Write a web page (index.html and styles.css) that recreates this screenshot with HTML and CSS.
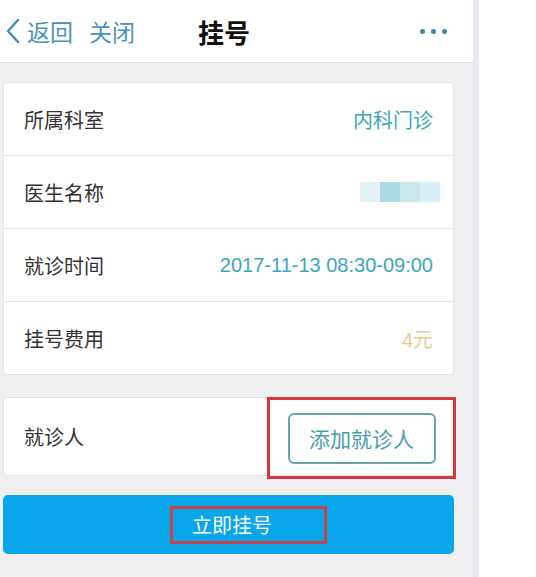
FILE: index.html
```html
<!DOCTYPE html>
<html lang="zh-CN">
<head>
    <meta charset="UTF-8">
    <meta name="viewport" content="width=device-width, initial-scale=1.0">
    <title>挂号</title>
    <link rel="stylesheet" href="styles.css">
</head>
<body>
    <div class="phone">
        <div class="header">
            <div class="nav-left">
                <svg class="back-icon" width="15" height="26" viewBox="0 0 15 26">
                    <path d="M13 2 L3 13 L13 24" fill="none" stroke="#3f8fb3" stroke-width="2.4" stroke-linecap="round" stroke-linejoin="round"/>
                </svg>
                <span class="nav-link">返回</span>
                <span class="nav-link close">关闭</span>
            </div>
            <div class="title">挂号</div>
            <div class="more">
                <span class="dot"></span><span class="dot"></span><span class="dot"></span>
            </div>
        </div>

        <div class="content">
            <div class="card">
                <div class="row">
                    <span class="label">所属科室</span>
                    <span class="value teal">内科门诊</span>
                </div>
                <div class="row">
                    <span class="label">医生名称</span>
                    <span class="blur">
                        <i class="b1"></i><i class="b2"></i><i class="b3"></i><i class="b4"></i>
                    </span>
                </div>
                <div class="row">
                    <span class="label">就诊时间</span>
                    <span class="value teal">2017-11-13 08:30-09:00</span>
                </div>
                <div class="row">
                    <span class="label">挂号费用</span>
                    <span class="value fee">4元</span>
                </div>
            </div>

            <div class="card patient">
                <span class="label">就诊人</span>
                <div class="mark">
                    <button class="add-btn">添加就诊人</button>
                </div>
            </div>

            <button class="submit-btn"><span class="mark-inline">立即挂号</span></button>
        </div>
    </div>
    <div class="edge"></div>
</body>
</html>
```

FILE: styles.css
```css
body {
    margin: 0;
    font-family: "Liberation Sans", "Noto Sans CJK SC", sans-serif;
    background: white;
    display: flex;
    height: 577px;
    overflow: hidden;
}
.phone {
    width: 473px;
    background: #f0f0f2;
}
.edge {
    width: 6px;
    background: #e9e9ef;
}
.header {
    height: 62px;
    background: white;
    border-bottom: 1px solid #e2e2e2;
    display: flex;
    align-items: center;
}
.nav-left {
    display: flex;
    align-items: center;
    padding-left: 5px;
}
.back-icon {
    margin-right: 7px;
}
.nav-link {
    font-size: 23px;
    color: #4a93b6;
}
.nav-link.close {
    margin-left: 16px;
}
.title {
    margin-left: 63px;
    font-size: 26px;
    font-weight: bold;
    color: #111;
}
.more {
    margin-left: auto;
    margin-right: 26px;
    display: flex;
    gap: 6px;
}
.dot {
    width: 5px;
    height: 5px;
    border-radius: 50%;
    background: #3f88ad;
}
.content {
    padding: 19px 19px 0 3px;
}
.card {
    background: white;
    border: 1px solid #e4e4e4;
    border-radius: 3px;
}
.row {
    height: 72px;
    display: flex;
    align-items: center;
    justify-content: space-between;
    padding: 0 20px;
    border-bottom: 1px solid #e4e4e4;
}
.row:last-child {
    border-bottom: none;
}
.label {
    font-size: 20px;
    color: #333;
}
.value {
    font-size: 20px;
}
.teal {
    color: #3aa7b8;
}
.fee {
    color: #e8cc94;
}
.blur {
    display: flex;
    height: 20px;
    margin-right: -15px;
    padding-right: 8px;
    border-radius: 0 10px 10px 0;
    background: #f7fbfc;
}
.blur i {
    width: 20px;
    height: 20px;
}
.b1 { background: #e3f3f5; }
.b2 { background: #a9d9e1; }
.b3 { background: #c8e8ed; }
.b4 { background: #d8eff3; }
.patient {
    margin-top: 22px;
    height: 77px;
    display: flex;
    align-items: center;
    justify-content: space-between;
    padding-left: 20px;
}
.mark {
    align-self: stretch;
    margin: -1px -3px -4px 0;
    width: 183px;
    border: 3px solid #d3393f;
    display: flex;
    align-items: center;
    justify-content: center;
}
.add-btn {
    width: 148px;
    height: 51px;
    background: white;
    border: 2px solid #6aa6b0;
    border-radius: 6px;
    font-family: inherit;
    font-size: 21px;
    color: #4a9eaa;
}
.submit-btn {
    margin-top: 19px;
    width: 451px;
    height: 59px;
    border: none;
    border-radius: 5px;
    background: #0aa6ea;
    display: flex;
    align-items: center;
    justify-content: center;
    padding: 0;
}
.mark-inline {
    box-sizing: border-box;
    width: 157px;
    height: 38px;
    border: 3px solid #c9434f;
    display: flex;
    align-items: center;
    padding-left: 19px;
    margin-left: 40px;
    font-family: "Liberation Sans", "Noto Sans CJK SC", sans-serif;
    font-size: 20px;
    color: white;
}
```
